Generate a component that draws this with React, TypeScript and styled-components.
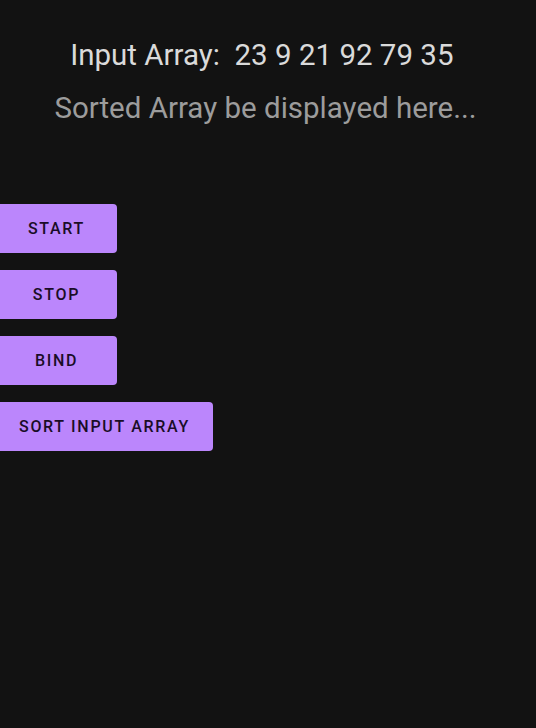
import React from 'react';
import styled, { createGlobalStyle } from 'styled-components';

const GlobalStyle = createGlobalStyle`
  html, body {
    margin: 0;
    padding: 0;
    background-color: #121212;
  }
  body {
    font-family: Roboto, "Noto Sans", sans-serif;
  }
`;

const Screen = styled.div`
  width: 536px;
  height: 728px;
  background-color: #121212;
  display: flex;
  flex-direction: column;
  overflow: hidden;
`;

const Header = styled.div`
  display: flex;
  flex-direction: column;
  align-items: center;
  gap: 19px;
  padding: 38px 5px 0 0;
`;

const Line = styled.div<{ muted?: boolean }>`
  font-size: 29.5px;
  line-height: 34px;
  color: ${props => (props.muted ? '#9c9c9c' : '#dadada')};
  white-space: pre;
`;

const Buttons = styled.div`
  display: flex;
  flex-direction: column;
  align-items: flex-start;
  gap: 17px;
  margin-top: 79px;
  margin-left: -4px;
`;

const Button = styled.button`
  min-width: 121px;
  height: 49px;
  padding: 0 23px;
  border: none;
  border-radius: 4px;
  background-color: #bb86fc;
  color: #1a0d27;
  font-family: Roboto, "Noto Sans", sans-serif;
  font-size: 16px;
  font-weight: 500;
  letter-spacing: 1.7px;
  text-transform: uppercase;
  cursor: pointer;
`;

const inputArray = [23, 9, 21, 92, 79, 35];

export default function App() {
  return (
    <Screen>
      <GlobalStyle />
      <Header>
        <Line>{`Input Array:  ${inputArray.join(' ')} `}</Line>
        <Line muted>Sorted Array be displayed here...</Line>
      </Header>
      <Buttons>
        <Button>Start</Button>
        <Button>Stop</Button>
        <Button>Bind</Button>
        <Button>Sort Input Array</Button>
      </Buttons>
    </Screen>
  );
}
